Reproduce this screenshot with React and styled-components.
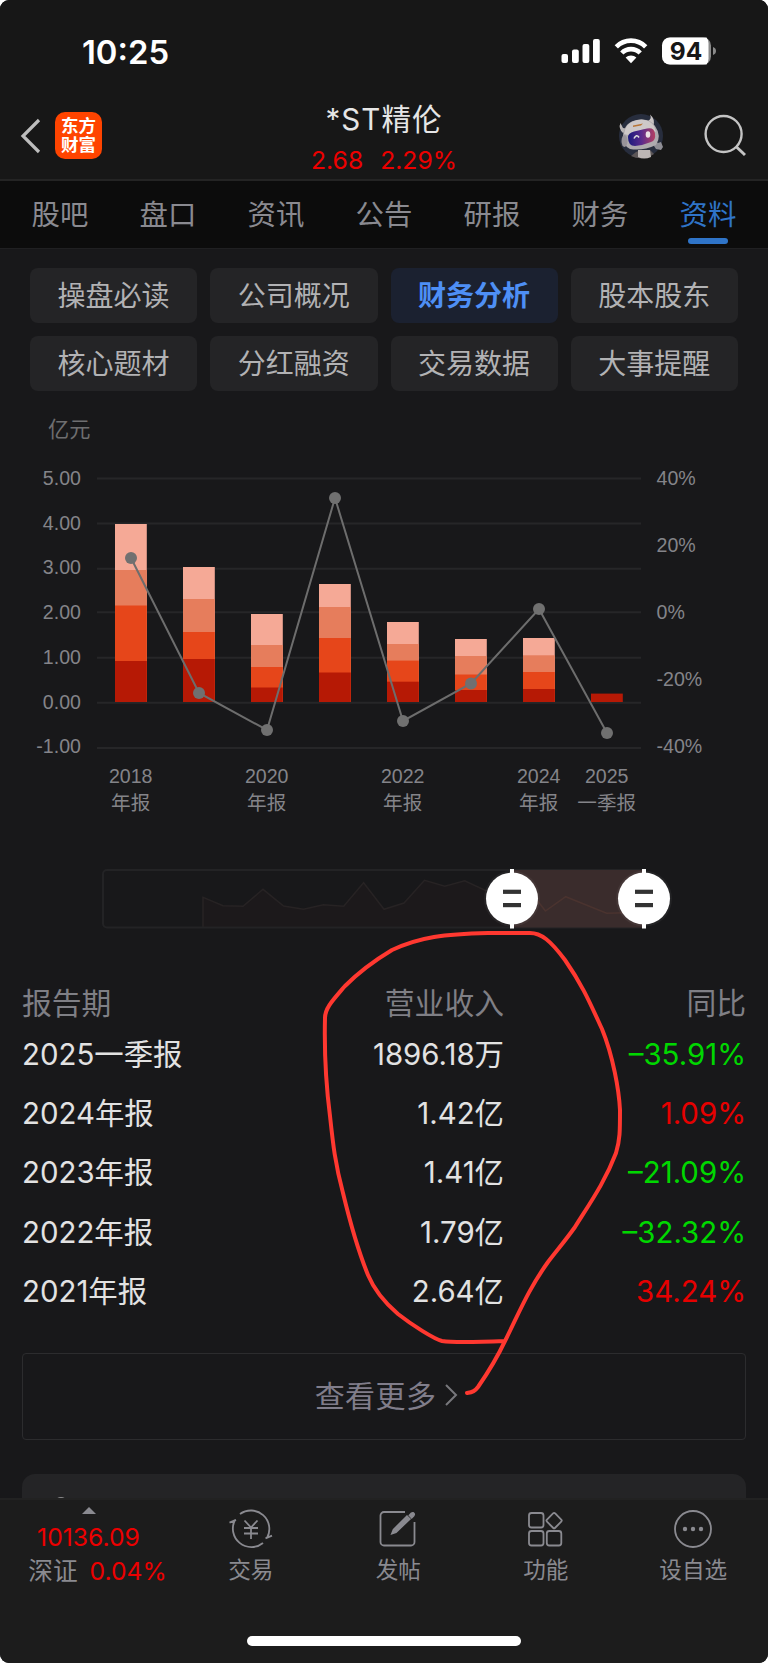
import { Fragment } from 'react';
import styled, { createGlobalStyle } from 'styled-components';

const GlobalStyle = createGlobalStyle`
  * { box-sizing: border-box; }
  body {
    margin: 0;
    background: #fff;
    font-family: Inter, 'Noto Sans CJK SC', sans-serif;
  }
`;

const Screen = styled.div`
  position: relative;
  width: 768px;
  height: 1663px;
  display: flex;
  flex-direction: column;
  background: #18181a;
  border-radius: 9px;
  overflow: hidden;
`;

const StatusBar = styled.div`
  height: 100px;
  padding: 3px 50px 0 82px;
  display: flex;
  align-items: center;
  justify-content: space-between;
  background: #171717;
`;

const Clock = styled.span`
  font-size: 32.8px;
  font-weight: 600;
  color: #fff;
`;

const Header = styled.header`
  height: 81px;
  display: grid;
  grid-template-columns: 240px 1fr 240px;
  background: #171717;
  border-bottom: 2px solid #242424;
`;

const HeaderLeft = styled.div`
  display: flex;
  align-items: center;
  padding: 0 0 8px 20px;
  gap: 14px;
`;

const Logo = styled.div`
  width: 47px;
  height: 47px;
  padding-top: 4px;
  border-radius: 10px;
  background: #ff4400;
  color: #fff;
  font-size: 17.5px;
  font-weight: 700;
  line-height: 19px;
  text-align: center;
`;

const HeaderTitle = styled.div`
  display: flex;
  flex-direction: column;
  align-items: center;
`;

const StockName = styled.h1`
  margin: 2px 0 0;
  font-size: 29.5px;
  font-weight: 400;
  line-height: 34px;
  letter-spacing: 1.1px;
  color: #e6e6e6;
  white-space: nowrap;
`;

const Quote = styled.div`
  display: flex;
  gap: 17px;
  margin-top: 9px;
  font-size: 24.7px;
  line-height: 30px;
  color: #ec0000;
`;

const HeaderRight = styled.div`
  display: flex;
  align-items: center;
  justify-content: flex-end;
  gap: 39px;
  padding: 0 20px 8px 0;
`;

const Tabs = styled.nav`
  height: 68px;
  padding: 0 6px;
  display: grid;
  grid-template-columns: repeat(7, 1fr);
  background: #0c0c0c;
  border-bottom: 1px solid #202022;
`;

const Tab = styled.div`
  display: flex;
  flex-direction: column;
  align-items: center;
  padding-top: 13px;
  font-size: 28.4px;
  line-height: 42px;
  color: ${p => p.$active ? '#2f74c8' : '#8a8a90'};

  &::after {
    content: '';
    width: 40px;
    height: 6px;
    margin-top: 2px;
    border-radius: 3px;
    background: ${p => p.$active ? '#2f74c8' : 'transparent'};
  }
`;

const SubTabs = styled.div`
  display: grid;
  grid-template-columns: repeat(4, 1fr);
  gap: 13px;
  padding: 19px 30px 0;
`;

const SubTab = styled.div`
  height: 55px;
  padding-top: 1px;
  border-radius: 8px;
  font-size: 28px;
  line-height: 55px;
  text-align: center;
  font-weight: ${p => p.$active ? 600 : 400};
  color: ${p => p.$active ? '#4e8ff5' : '#b2b2b4'};
  background: ${p => p.$active ? '#1b2130' : '#242426'};
`;

const Unit = styled.div`
  margin: 22px 0 0 48px;
  font-size: 21.2px;
  line-height: 32px;
  color: #6e6e70;
`;

const ChartSvg = styled.svg`
  display: block;
  flex: none;
  font-family: 'Liberation Sans', 'Noto Sans CJK SC', sans-serif;
  font-size: 19.6px;
  fill: #848489;
`;

const RangeSvg = styled.svg`
  display: block;
  flex: none;
`;

const Table = styled.div`
  display: grid;
  grid-template-columns: 282px 1fr 242px;
  padding: 0 22px 0 22px;
  margin-top: 47px;
`;

const Cell = styled.div`
  height: ${p => p.$head ? '43px' : '59.2px'};
  line-height: ${p => p.$head ? '42px' : '59.2px'};
  font-size: ${p => p.$head ? '29.8px' : '29.4px'};
  color: ${p => p.$color || (p.$head ? '#7f7f85' : '#e2e2e2')};
  text-align: ${p => p.$left ? 'left' : 'right'};
  white-space: nowrap;
`;

const MoreButton = styled.div`
  height: 87px;
  margin: 32px 22px 0;
  padding: 0 0 5px 5px;
  display: flex;
  flex: none;
  align-items: center;
  justify-content: center;
  gap: 8px;
  border: 1px solid #2c2c2e;
  border-radius: 4px;
  font-size: 30px;
  letter-spacing: 0.4px;
  color: #807d8a;

  svg { margin-top: 3px; }
`;

const NextCard = styled.div`
  flex: 1;
  margin: 34px 22px 0;
  padding: 23px 0 0 32px;
  border-radius: 13px 13px 0 0;
  background: #242426;
  overflow: hidden;
`;

const Ring = styled.div`
  width: 14px;
  height: 14px;
  border-radius: 50%;
  border: 2px solid #8a8a8c;
`;

const BottomBar = styled.footer`
  height: 165px;
  flex: none;
  display: flex;
  flex-direction: column;
  justify-content: space-between;
  align-items: center;
  background: #1c1c1c;
  border-top: 2px solid #222222;
`;

const BottomRow = styled.div`
  width: 100%;
  display: grid;
  grid-template-columns: 177px repeat(4, 147.5px);
`;

const IndexBox = styled.div`
  display: flex;
  flex-direction: column;
  align-items: center;
  padding: 7px 0 0;
  font-size: 24.7px;
  color: #ec0000;
`;

const IndexValue = styled.div`
  margin-top: 7px;
  line-height: 32px;
`;

const IndexLine = styled.div`
  display: flex;
  gap: 12px;
  padding-left: 18px;
  margin-top: 1px;
  line-height: 34px;
  white-space: nowrap;
`;

const IndexName = styled.span`
  color: #8a8a90;
`;

const NavItem = styled.div`
  display: flex;
  flex-direction: column;
  align-items: center;
  gap: 2px;
  padding-top: 7px;
  font-size: 22.6px;
  line-height: 34px;
  color: #8a8a90;
`;

const HomeIndicator = styled.div`
  width: 274px;
  height: 10px;
  margin-bottom: 17px;
  border-radius: 5px;
  background: #fff;
`;

const Annotation = styled.svg`
  position: absolute;
  top: 0;
  left: 0;
  pointer-events: none;
`;

const TABS = ['股吧', '盘口', '资讯', '公告', '研报', '财务', '资料'];
const SUB_TABS = ['操盘必读', '公司概况', '财务分析', '股本股东', '核心题材', '分红融资', '交易数据', '大事提醒'];

// segment edges from the top of the bar down, in chart pixels
const BARS = [
  [79, 125, 160.5, 216],
  [122, 154, 187, 214],
  [169, 200, 222, 242.5],
  [139, 162, 193, 227.5],
  [177, 199, 215.6, 236.7],
  [194, 211, 229.5, 245],
  [193, 210.3, 227, 244],
  [248.6],
];
const BAR_BASE = 257;
const BAR_COLORS = ['#f5a996', '#e67d5c', '#e6461a', '#b61905'];
const YOY = [113, 248, 285, 53, 276, 238.5, 164, 288];
const GRID = [33.5, 78.5, 123.7, 167.3, 212.7, 257.8, 303];
const LEFT_LABELS = ['5.00', '4.00', '3.00', '2.00', '1.00', '0.00', '-1.00'];
const RIGHT_LABELS = ['40%', '20%', '0%', '-20%', '-40%'];
const YEARS = [
  [0, '2018', '年报'],
  [2, '2020', '年报'],
  [4, '2022', '年报'],
  [6, '2024', '年报'],
  [7, '2025', '一季报'],
];
const barX = i => 131 + i * 68;

const ROWS = [
  ['2025一季报', '1896.18万', '–35.91%'],
  ['2024年报', '1.42亿', '1.09%'],
  ['2023年报', '1.41亿', '–21.09%'],
  ['2022年报', '1.79亿', '–32.32%'],
  ['2021年报', '2.64亿', '34.24%'],
];

const StatusIcons = () => (
  <svg width="158" height="32" viewBox="0 0 158 32" style={{ fontFamily: 'Inter' }}>
    <g fill="#fff">
      <rect x="1.5" y="18" width="6.5" height="9" rx="2" />
      <rect x="12" y="13.5" width="6.8" height="13.5" rx="2" />
      <rect x="22.5" y="8" width="6.8" height="19" rx="2" />
      <rect x="33" y="3" width="6.8" height="24" rx="2" />
    </g>
    <g fill="none" stroke="#fff" strokeWidth="4.6">
      <path d="M56.3 10.8a20.5 20.5 0 0 1 29.4 0" />
      <path d="M61.8 17a12.8 12.8 0 0 1 18.4 0" />
    </g>
    <path d="M71 27.2l-5.4-5.6a7.8 7.8 0 0 1 10.8 0z" fill="#fff" />
    <rect x="102" y="1.5" width="49" height="27" rx="8" fill="#8a8a8a" />
    <path d="M110 1.5h36.5q2 2 2 6v15q0 4-2 6H110a8 8 0 0 1-8-8v-11a8 8 0 0 1 8-8z" fill="#fff" />
    <path d="M153 11q3 1.2 3 4t-3 4z" fill="#8a8a8a" />
    <text x="126" y="24" fontSize="24.5" fontWeight="700" textAnchor="middle" fill="#171717">94</text>
  </svg>
);

const Robot = () => (
  <svg width="48" height="48" viewBox="0 0 48 48">
    <defs>
      <linearGradient id="visor" x1="0" x2="1">
        <stop offset="0" stopColor="#1b1a7c" />
        <stop offset="0.5" stopColor="#5a2a8c" />
        <stop offset="1" stopColor="#b54062" />
      </linearGradient>
    </defs>
    <circle cx="24" cy="24" r="22" fill="#272d3d" />
    <path d="M14 44l5-4 5-2 9 0 4 4-5 3q-10 3-18-1z" fill="#5c5657" />
    <path d="M21 38h12l1 7q-7 3-13 0z" fill="#bdb7b5" />
    <path d="M37 34l1-5 3 2 3-1 2 5-2 3-5-1z" fill="#8f8e95" />
    <path d="M6 21q-5-5-2.500-10l2.500 5 6 1z" fill="#b9b5b5" />
    <path d="M31 9q4-2 2-6.500 6 5 3 12z" fill="#c9c4c4" />
    <path d="M6 24Q7 10 20 8T38 14q7 10 1 19-13 6-26 4Q6 34 6 24z" fill="#aeaaae" />
    <path d="M7 22Q9 10 20 8T37 14l2 6-12-3-16 6z" fill="#cdc8c8" />
    <ellipse cx="7.500" cy="29" rx="3" ry="6" fill="#98949a" />
    <path d="M16 13.500l10-2-2 2-8 1.500z" fill="#b87536" />
    <path d="M11 25q0-4 6-5.500l13-3q7-1.500 8 5 1 7-4 8.500-7 3-16 4-7 0-7-9z" fill="url(#visor)" />
    <path d="M17 26.500q2.500-5 5-1" fill="none" stroke="#ddd" strokeWidth="1.6" />
    <ellipse cx="31" cy="22.500" rx="2.3" ry="3.2" fill="#eadfe4" />
  </svg>
);

const Chart = () => (
  <ChartSvg width="768" height="420">
    {GRID.map(y => <line key={y} x1="97" x2="641" y1={y} y2={y} stroke="#262628" strokeWidth="2" />)}
    {LEFT_LABELS.map((t, i) => (
      <text key={t} x="81" y={40 + i * 44.7} textAnchor="end">{t}</text>
    ))}
    {RIGHT_LABELS.map((t, i) => (
      <text key={t} x="656.5" y={40 + i * 67}>{t}</text>
    ))}
    {BARS.map((edges, i) => {
      const colors = BAR_COLORS.slice(4 - edges.length);
      // each segment runs to the base, the next one covers its lower part
      return edges.map((y, j) => (
        <rect
          key={`${i}-${j}`}
          x={barX(i) - 16}
          y={y}
          width="31.8"
          height={BAR_BASE - y}
          fill={colors[j]}
        />
      ));
    })}
    <polyline
      points={YOY.map((y, i) => `${barX(i)},${y}`).join(' ')}
      fill="none"
      stroke="#6d6d6d"
      strokeWidth="2"
    />
    {YOY.map((y, i) => <circle key={i} cx={barX(i)} cy={y} r="6" fill="#707070" />)}
    {YEARS.map(([i, year, label]) => (
      <g key={year} textAnchor="middle">
        <text x={barX(i) - 0.3} y="337.5">{year}</text>
        <text x={barX(i) - 0.3} y="365">{label}</text>
      </g>
    ))}
  </ChartSvg>
);

const Handle = ({ x }) => (
  <g>
    <circle cx={x} cy="33.6" r="28" fill="#fff" opacity="0.05" />
    <rect x={x - 2} y="4" width="4" height="59.5" fill="#fff" />
    <circle cx={x} cy="33.6" r="26" fill="#fff" />
    <rect x={x - 9} y="24.7" width="18" height="4.2" fill="#333" />
    <rect x={x - 9} y="38" width="18" height="4.2" fill="#333" />
  </g>
);

const TREND = '203,32.3 223,40.7 243,41.3 263,24.3 283.6,41 303.5,44.3 323.4,39.7 343.7,41.3 363.6,17.7 384,44.3 404,38 424.5,15.3 444.8,21.3 464.7,15.7 486,25.7 512,20 530,26 545.4,46 565.7,31.7 606.6,48.3 626,47.7 644,46';

const RangeSlider = () => (
  <RangeSvg width="768" height="70">
    <polygon points={`203,62 ${TREND} 644,62`} fill="#1c191b" />
    <polyline points={`203,62 ${TREND}`} fill="none" stroke="#272324" strokeWidth="1.5" />
    <rect x="103" y="5" width="541" height="57.5" rx="4" fill="none" stroke="#232325" strokeWidth="2" />
    <rect x="512" y="5" width="132" height="57.5" fill="#3a2c2c" />
    <polyline points="530,26 545.4,46 565.7,31.7 606.6,48.3 626,47.7" fill="none" stroke="#4a332f" strokeWidth="1.5" />
    <Handle x={512} />
    <Handle x={644} />
  </RangeSvg>
);

const iconProps = { width: 44, height: 44, viewBox: '0 0 44 44', fill: 'none', stroke: '#8a8a90', strokeWidth: 1.8 };

const NAV = [
  ['交易', (
    <svg {...iconProps}>
      <path d="M11 7A18.5 18.5 0 0 1 38 31M36.500 31.300L43 28.600M34 36A18.5 18.5 0 0 1 6 13M0.500 15.600L7 12.800" />
      <path d="M15.500 13.500L22 20.500L28.500 13.500M22 20.500V32M15 21H29M15 26.500H29" />
    </svg>
  )],
  ['发帖', (
    <svg {...iconProps}>
      <path d="M29 5H8a3.500 3.500 0 0 0-3.500 3.500V35A3.500 3.500 0 0 0 8 38.500H35A3.500 3.500 0 0 0 38.500 35V15" />
      <path d="M16 26.500l1.500-3.800L31 9.200l2.800 2.700L20 25.200z" fill="#8a8a90" />
      <path d="M33.500 8.300l2-2q1.600-1 2.400.3.700 1-.2 2l-2 2z" fill="#8a8a90" />
    </svg>
  )],
  ['功能', (
    <svg {...iconProps}>
      <rect x="5" y="6" width="14.500" height="14.500" rx="2.500" />
      <rect x="5" y="24" width="14.500" height="14.500" rx="2.500" />
      <rect x="22.800" y="24" width="14.500" height="14.500" rx="2.500" />
      <rect x="24.300" y="7.800" width="11.600" height="11.600" rx="1.500" transform="rotate(45 30.100 13.600)" />
    </svg>
  )],
  ['设自选', (
    <svg {...iconProps}>
      <circle cx="22" cy="22" r="18" />
      <g fill="#8a8a90" stroke="none">
        <circle cx="14" cy="22" r="2.200" />
        <circle cx="22" cy="22" r="2.200" />
        <circle cx="30" cy="22" r="2.200" />
      </g>
    </svg>
  )],
];

const App = () => (
  <>
    <GlobalStyle />
    <Screen>
      <StatusBar>
        <Clock>10:25</Clock>
        <StatusIcons />
      </StatusBar>

      <Header>
        <HeaderLeft>
          <svg width="21" height="36" viewBox="0 0 21 36" fill="none" stroke="#bdbdbd" strokeWidth="3.2">
            <path d="M19 2L3 18L19 34" />
          </svg>
          <Logo>东方<br />财富</Logo>
        </HeaderLeft>
        <HeaderTitle>
          <StockName>*ST精伦</StockName>
          <Quote><span>2.68</span><span>2.29%</span></Quote>
        </HeaderTitle>
        <HeaderRight>
          <Robot />
          <svg width="44" height="44" viewBox="0 0 44 44" fill="none" stroke="#c4c4c4" strokeWidth="2.4">
            <circle cx="19.600" cy="20" r="18" />
            <path d="M32 32.500L41 41" strokeWidth="3" />
          </svg>
        </HeaderRight>
      </Header>

      <Tabs>
        {TABS.map(t => <Tab key={t} $active={t === '资料'}>{t}</Tab>)}
      </Tabs>

      <SubTabs>
        {SUB_TABS.map(t => <SubTab key={t} $active={t === '财务分析'}>{t}</SubTab>)}
      </SubTabs>

      <Unit>亿元</Unit>
      <Chart />
      <RangeSlider />

      <Table>
        <Cell $head $left>报告期</Cell>
        <Cell $head>营业收入</Cell>
        <Cell $head>同比</Cell>
        {ROWS.map(([period, income, yoy]) => (
          <Fragment key={period}>
            <Cell $left>{period}</Cell>
            <Cell>{income}</Cell>
            <Cell $color={yoy.startsWith('–') ? '#00d700' : '#e60000'}>{yoy}</Cell>
          </Fragment>
        ))}
      </Table>

      <MoreButton>
        查看更多
        <svg width="14" height="24" viewBox="0 0 14 24" fill="none" stroke="#77777c" strokeWidth="2">
          <path d="M2 2L12 12L2 22" />
        </svg>
      </MoreButton>

      <NextCard><Ring /></NextCard>

      <BottomBar>
        <BottomRow>
          <IndexBox>
            <svg width="14" height="7"><path d="M7 0L14 7H0z" fill="#8a8a90" /></svg>
            <IndexValue>10136.09</IndexValue>
            <IndexLine><IndexName>深证</IndexName>0.04%</IndexLine>
          </IndexBox>
          {NAV.map(([label, icon]) => <NavItem key={label}>{icon}{label}</NavItem>)}
        </BottomRow>
        <HomeIndicator />
      </BottomBar>

      <Annotation width="768" height="1663" fill="none" stroke="#ff3830" strokeWidth="4" strokeLinecap="round" strokeLinejoin="round">
        <path d="M505 1341Q455 1343 442 1341C434 1339 412 1325 398 1314C384 1302 373 1287 368 1275C357 1248 350 1222 343 1193C335 1163 333 1144 330 1116C326 1085 324 1060 325 1018C325 1008 333 1000 345 986C360 971 377 959 392 950C420 937 444 934 488 933H530C541 933 550 940 565 960C583 986 590 1003 602 1029C613 1056 619 1090 620 1110C620 1131 620 1140 616 1153C605 1182 590 1203 575 1227C565 1241 558 1249 548 1262C528 1290 520 1311 505 1341C496 1360 487 1374 478 1387C475 1391 473 1392 467 1393" />
      </Annotation>
    </Screen>
  </>
);

export default App;
